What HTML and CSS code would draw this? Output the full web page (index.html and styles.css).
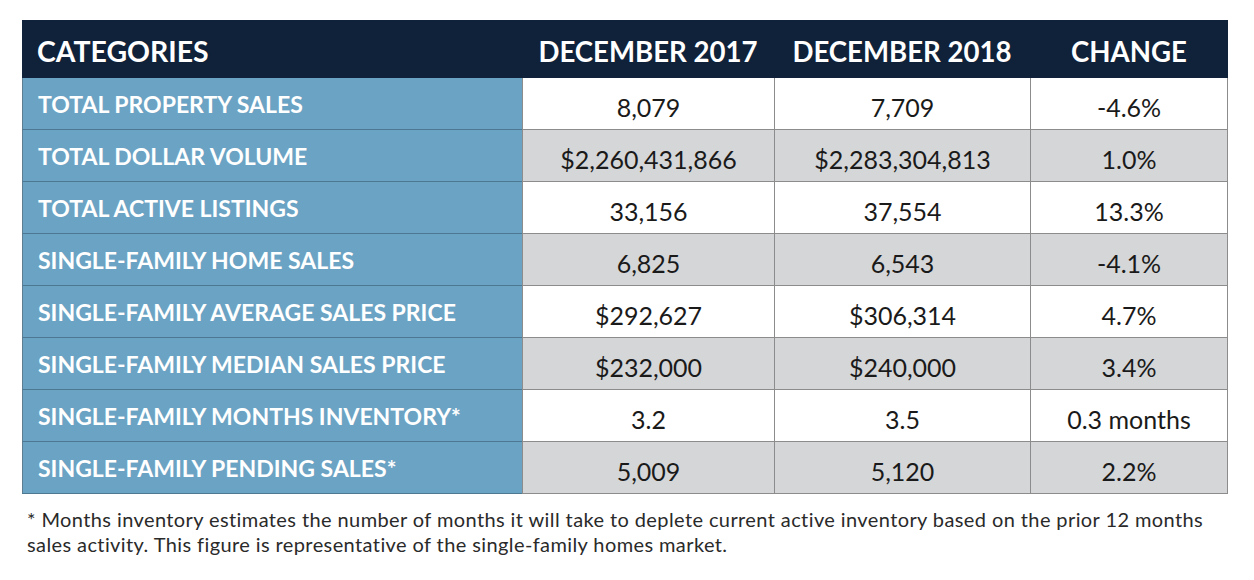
FILE: index.html
```html
<!DOCTYPE html>
<html lang="en">
<head>
<meta charset="utf-8">
<title>December Market Statistics</title>
<link rel="stylesheet" href="styles.css">
</head>
<body>
<div class="page">
  <div class="stats">
    <div class="hd hd-cat">CATEGORIES</div>
    <div class="hd">DECEMBER 2017</div>
    <div class="hd">DECEMBER 2018</div>
    <div class="hd">CHANGE</div>

    <div class="cat">TOTAL PROPERTY SALES</div>
    <div class="val">8,079</div>
    <div class="val">7,709</div>
    <div class="val last">-4.6%</div>

    <div class="cat">TOTAL DOLLAR VOLUME</div>
    <div class="val alt">$2,260,431,866</div>
    <div class="val alt">$2,283,304,813</div>
    <div class="val alt last">1.0%</div>

    <div class="cat">TOTAL ACTIVE LISTINGS</div>
    <div class="val">33,156</div>
    <div class="val">37,554</div>
    <div class="val last">13.3%</div>

    <div class="cat">SINGLE-FAMILY HOME SALES</div>
    <div class="val alt">6,825</div>
    <div class="val alt">6,543</div>
    <div class="val alt last">-4.1%</div>

    <div class="cat">SINGLE-FAMILY AVERAGE SALES PRICE</div>
    <div class="val">$292,627</div>
    <div class="val">$306,314</div>
    <div class="val last">4.7%</div>

    <div class="cat">SINGLE-FAMILY MEDIAN SALES PRICE</div>
    <div class="val alt">$232,000</div>
    <div class="val alt">$240,000</div>
    <div class="val alt last">3.4%</div>

    <div class="cat">SINGLE-FAMILY MONTHS INVENTORY*</div>
    <div class="val">3.2</div>
    <div class="val">3.5</div>
    <div class="val last">0.3 months</div>

    <div class="cat">SINGLE-FAMILY PENDING SALES*</div>
    <div class="val alt">5,009</div>
    <div class="val alt">5,120</div>
    <div class="val alt last">2.2%</div>
  </div>
  <p class="note">* Months inventory estimates the number of months it will take to deplete current active inventory based on the prior 12 months<br>sales activity. This figure is representative of the single-family homes market.</p>
</div>
</body>
</html>
```
FILE: styles.css
```css
html, body {
  margin: 0;
  padding: 0;
  background: #ffffff;
}

.page {
  padding: 20px 0 0 22px;
  width: 1220px;
}

.stats {
  display: grid;
  grid-template-columns: 500px 252px 256px 198px;
  grid-template-rows: 58px repeat(8, 52px);
  width: 1206px;
}

.hd {
  background: #0f2239;
  color: #ffffff;
  font-family: "Lato", "Liberation Sans", sans-serif;
  font-weight: 700;
  font-size: 27.6px;
  display: flex;
  align-items: center;
  justify-content: center;
  padding-top: 4px;
  box-sizing: border-box;
}

.hd-cat {
  justify-content: flex-start;
  padding-left: 15px;
  font-size: 28.4px;
}

.cat {
  background: #6ba3c4;
  color: #ffffff;
  font-family: "Lato", "Liberation Sans", sans-serif;
  font-weight: 700;
  font-size: 23px;
  display: flex;
  align-items: center;
  padding-left: 15px;
  padding-top: 1px;
  border-bottom: 1px solid #4c7892;
  border-left: 1px solid #5f7d90;
  box-sizing: border-box;
}

.val {
  background: #ffffff;
  color: #1a1a1a;
  font-family: "Lato", "Liberation Sans", sans-serif;
  font-size: 25px;
  display: flex;
  align-items: center;
  justify-content: center;
  padding-top: 6px;
  border-left: 1px solid #8c8c8c;
  border-bottom: 1px solid #8c8c8c;
  box-sizing: border-box;
}

.val.alt {
  background: #d5d6d8;
}

.val.last {
  border-right: 1px solid #8c8c8c;
}

.note {
  margin: 13px 0 0 5px;
  font-family: "Lato", "Liberation Sans", sans-serif;
  font-size: 20px;
  letter-spacing: 0.4px;
  line-height: 25px;
  color: #2a2a2a;
}
```
